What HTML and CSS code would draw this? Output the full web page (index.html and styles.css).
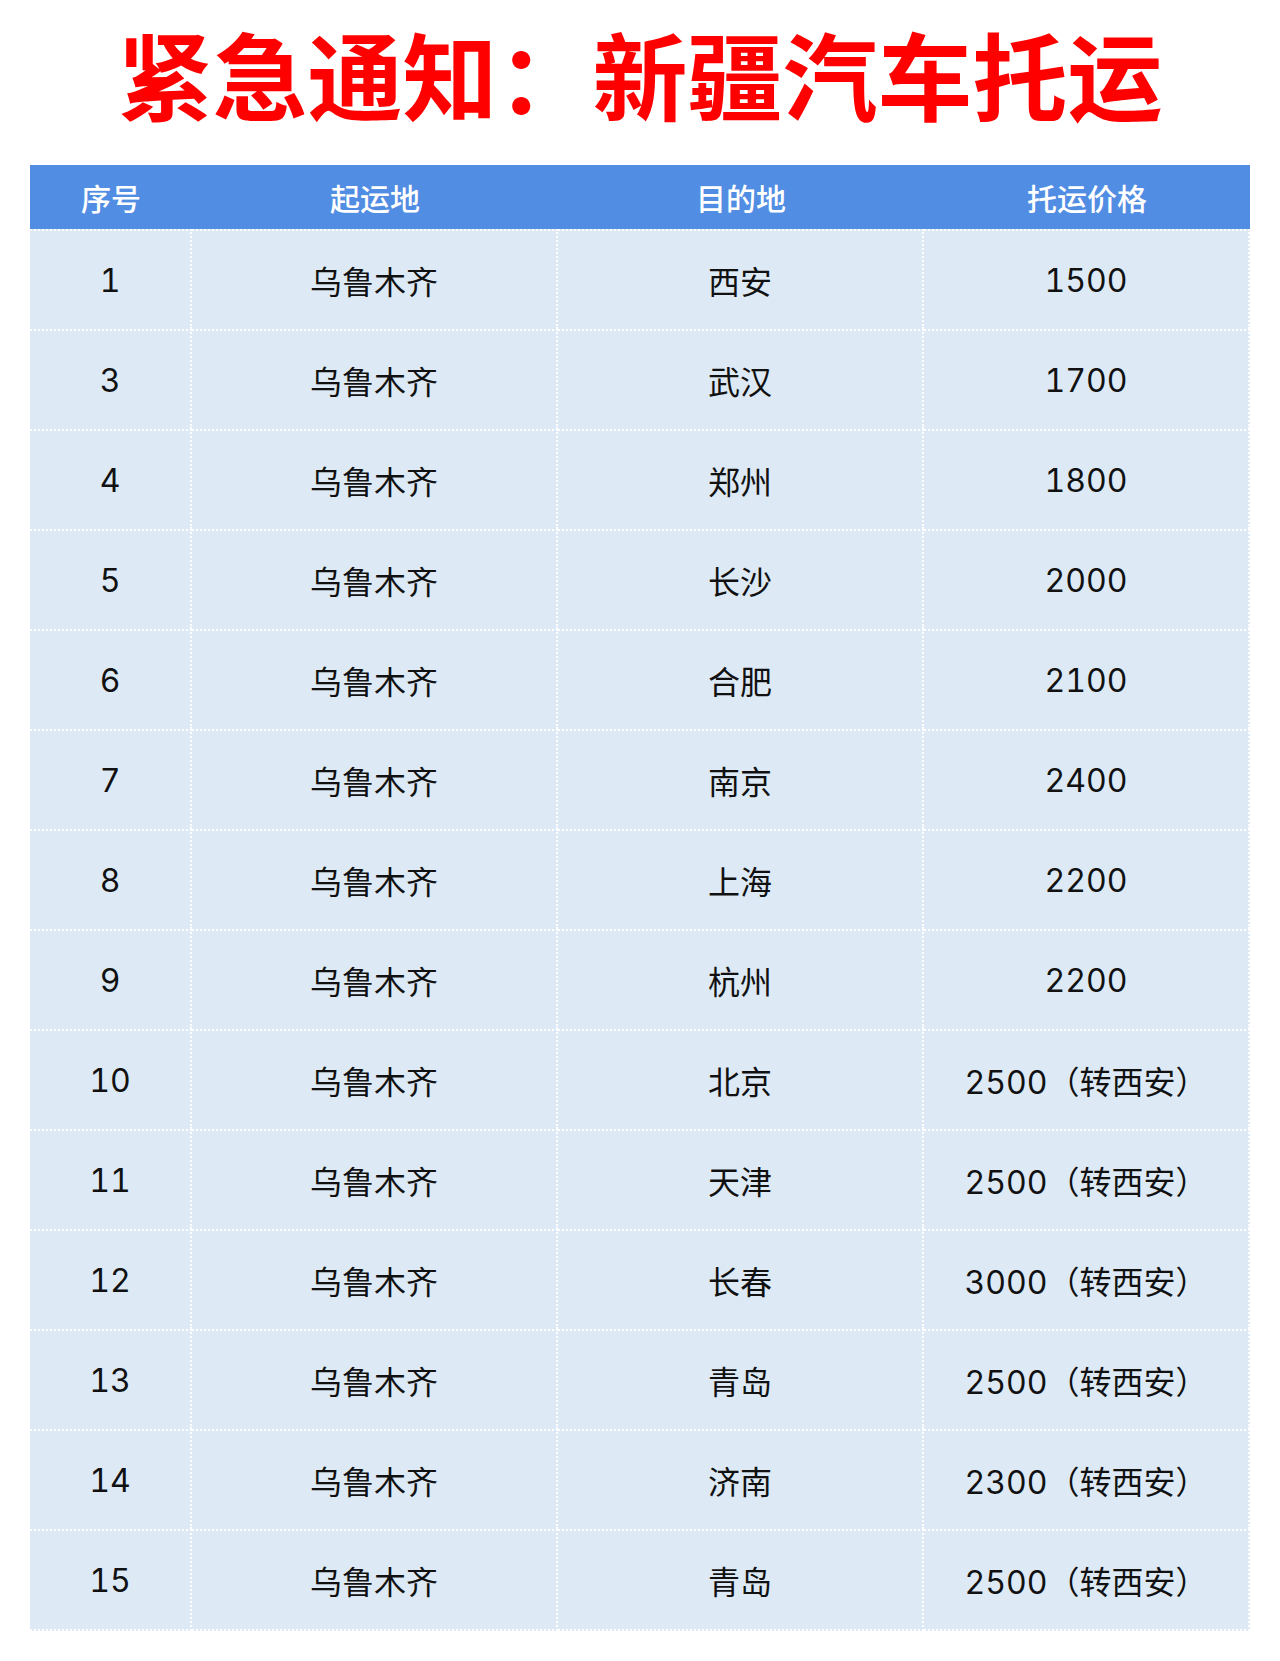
FILE: index.html
```html
<!DOCTYPE html>
<html lang="zh-CN">
<head>
<meta charset="utf-8">
<title>紧急通知：新疆汽车托运</title>
<link rel="stylesheet" href="styles.css">
</head>
<body>
<h1 class="title">紧急通知：新疆汽车托运</h1>
<table class="price-table">
  <thead>
    <tr><th class="c1">序号</th><th class="c2">起运地</th><th class="c3">目的地</th><th class="c4">托运价格</th></tr>
  </thead>
  <tbody>
    <tr><td>1</td><td>乌鲁木齐</td><td>西安</td><td>1500</td></tr>
    <tr><td>3</td><td>乌鲁木齐</td><td>武汉</td><td>1700</td></tr>
    <tr><td>4</td><td>乌鲁木齐</td><td>郑州</td><td>1800</td></tr>
    <tr><td>5</td><td>乌鲁木齐</td><td>长沙</td><td>2000</td></tr>
    <tr><td>6</td><td>乌鲁木齐</td><td>合肥</td><td>2100</td></tr>
    <tr><td>7</td><td>乌鲁木齐</td><td>南京</td><td>2400</td></tr>
    <tr><td>8</td><td>乌鲁木齐</td><td>上海</td><td>2200</td></tr>
    <tr><td>9</td><td>乌鲁木齐</td><td>杭州</td><td>2200</td></tr>
    <tr><td>10</td><td>乌鲁木齐</td><td>北京</td><td>2500（转西安）</td></tr>
    <tr><td>11</td><td>乌鲁木齐</td><td>天津</td><td>2500（转西安）</td></tr>
    <tr><td>12</td><td>乌鲁木齐</td><td>长春</td><td>3000（转西安）</td></tr>
    <tr><td>13</td><td>乌鲁木齐</td><td>青岛</td><td>2500（转西安）</td></tr>
    <tr><td>14</td><td>乌鲁木齐</td><td>济南</td><td>2300（转西安）</td></tr>
    <tr><td>15</td><td>乌鲁木齐</td><td>青岛</td><td>2500（转西安）</td></tr>
  </tbody>
</table>
</body>
</html>
```
FILE: styles.css
```css
html, body {
  margin: 0;
  padding: 0;
  background: #ffffff;
}
body {
  font-family: Inter, "Noto Sans CJK SC", sans-serif;
  color: #111111;
}
.title {
  margin: 0;
  padding-top: 25px;
  height: 100px;
  line-height: 95px;
  text-align: center;
  font-family: "Noto Sans CJK SC", sans-serif;
  font-weight: 700;
  font-size: 95px;
  color: #ff0000;
  white-space: nowrap;
}
.price-table {
  margin: 40px 0 0 30px;
  width: 1220px;
  border-collapse: separate;
  border-spacing: 0;
  table-layout: fixed;
}
.price-table th {
  height: 64px;
  padding: 0;
  background: #518de3;
  color: #ffffff;
  font-family: "Noto Sans CJK SC", sans-serif;
  font-weight: 500;
  font-size: 30px;
  text-align: center;
  vertical-align: middle;
}
.price-table .c1 { width: 162px; }
.price-table .c2 { width: 366px; }
.price-table .c3 { width: 366px; }
.price-table .c4 { width: 326px; }
.price-table td {
  height: 98px;
  padding: 0;
  background: #ddeaf6;
  border-top: 2px dotted #ffffff;
  border-right: 2px dotted #ffffff;
  font-size: 32px;
  font-weight: 400;
  font-feature-settings: "tnum" 1;
  text-align: center;
  vertical-align: middle;
  white-space: nowrap;
}
.price-table tbody tr:last-child td {
  border-bottom: 2px dotted #ffffff;
}
```
